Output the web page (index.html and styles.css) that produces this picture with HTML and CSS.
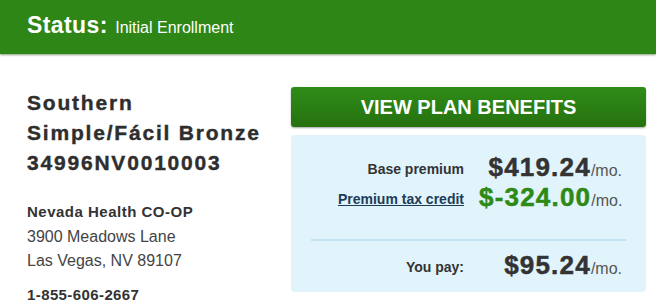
FILE: index.html
```html
<!DOCTYPE html>
<html lang="en">
<head>
<meta charset="utf-8">
<title>Plan</title>
<link rel="stylesheet" href="styles.css">
</head>
<body>
<header class="status-bar">
  <span class="status-label">Status:</span>
  <span class="status-value">Initial Enrollment</span>
</header>
<main class="plan">
  <section class="plan-info">
    <h1 class="plan-name">Southern<br>Simple/Fácil Bronze<br>34996NV0010003</h1>
    <div class="issuer">
      <div class="issuer-name">Nevada Health CO-OP</div>
      <div class="issuer-line">3900 Meadows Lane</div>
      <div class="issuer-line">Las Vegas, NV 89107</div>
    </div>
    <div class="phone">1-855-606-2667</div>
  </section>
  <section class="plan-cost">
    <button class="btn-benefits">VIEW PLAN BENEFITS</button>
    <div class="cost-box">
      <div class="cost-rows">
        <div class="cost-label">Base premium</div>
        <div class="cost-value"><span class="amount">$419.24</span><span class="per">/mo.</span></div>
        <a class="cost-label link" href="#">Premium tax credit</a>
        <div class="cost-value"><span class="amount green">$-324.00</span><span class="per">/mo.</span></div>
      </div>
      <hr class="divider">
      <div class="cost-rows total">
        <div class="cost-label">You pay:</div>
        <div class="cost-value"><span class="amount">$95.24</span><span class="per">/mo.</span></div>
      </div>
    </div>
  </section>
</main>
</body>
</html>
```

FILE: styles.css
```css
* { box-sizing: border-box; }
html, body { margin: 0; padding: 0; }
body {
  font-family: "Liberation Sans", Arial, sans-serif;
  background: #ffffff;
  color: #333333;
  width: 656px;
  height: 308px;
  overflow: hidden;
}
.status-bar {
  height: 54px;
  background: #2e8616;
  color: #ffffff;
  padding: 12px 0 0 27px;
  box-shadow: 0 1px 2px rgba(60, 90, 40, 0.6);
  white-space: nowrap;
}
.status-label {
  font-size: 23px;
  font-weight: bold;
  letter-spacing: 0.4px;
  margin-right: 3px;
}
.status-value {
  font-size: 16px;
}
.plan {
  display: flex;
  padding: 33px 10px 0 27px;
}
.plan-info {
  flex: 1;
}
.plan-name {
  margin: 1px 0 0;
  font-size: 21px;
  line-height: 30px;
  font-weight: bold;
  letter-spacing: 1.8px;
  -webkit-text-stroke: 0.4px #2e2e2e;
  color: #2e2e2e;
}
.issuer {
  margin-top: 22px;
  font-size: 16px;
  line-height: 24.5px;
  color: #444444;
}
.issuer-name {
  font-size: 15px;
  font-weight: bold;
  letter-spacing: 0.5px;
  color: #333333;
}
.phone {
  margin-top: 9px;
  font-size: 15px;
  line-height: 24px;
  font-weight: bold;
  letter-spacing: 0.4px;
  color: #333333;
}
.plan-cost {
  width: 355px;
  display: flex;
  flex-direction: column;
}
.btn-benefits {
  height: 40px;
  border: 0;
  border-radius: 3px;
  background: linear-gradient(#2f8c18, #26710f);
  box-shadow: 0 1px 2px rgba(0, 0, 0, 0.35);
  color: #ffffff;
  font-family: "Liberation Sans", Arial, sans-serif;
  font-size: 20px;
  font-weight: bold;
  padding: 0;
}
.cost-box {
  margin-top: 8px;
  height: 157px;
  background: #e1f3fb;
  border-radius: 4px;
  padding: 19px 20px 0;
}
.cost-rows {
  display: grid;
  grid-template-columns: 1fr 143px;
  column-gap: 15px;
  align-items: center;
  padding-right: 4px;
}
.cost-label {
  text-align: right;
  font-size: 14px;
  font-weight: bold;
  color: #333333;
}
.cost-label.link {
  color: #1d3c5a;
  text-decoration: underline;
}
.cost-value {
  text-align: right;
  line-height: 26px;
  white-space: nowrap;
}
.amount {
  font-size: 26px;
  font-weight: bold;
  letter-spacing: 1.2px;
  -webkit-text-stroke: 0.5px currentColor;
  color: #333333;
}
.amount.green {
  color: #2e8a16;
}
.per {
  font-size: 16px;
  color: #555555;
}
.divider {
  margin: 25px 0 11px;
  border: 0;
  height: 2px;
  background: #c2e3f2;
}
```
